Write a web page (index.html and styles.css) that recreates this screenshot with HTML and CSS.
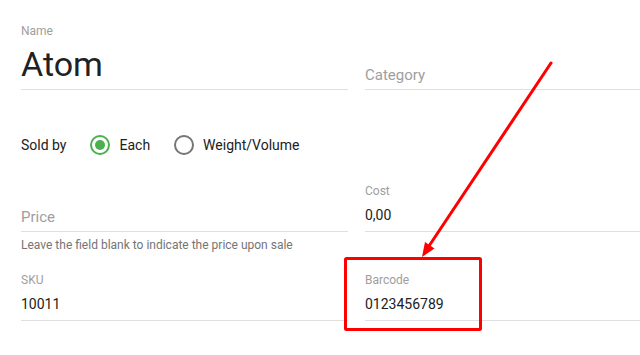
FILE: index.html
```html
<!DOCTYPE html>
<html lang="en">

<head>
    <meta charset="UTF-8">
    <meta name="viewport" content="width=device-width, initial-scale=1.0">
    <title>Item</title>
    <link rel="stylesheet" href="styles.css">
</head>

<body>
    <div class="form">
        <div class="row">
            <div class="field">
                <div class="label">Name</div>
                <div class="value big">Atom</div>
            </div>
            <div class="field">
                <div class="label hidden">Category</div>
                <div class="value placeholder">Category</div>
            </div>
        </div>

        <div class="sold-by">
            <span class="sold-label">Sold by</span>
            <label class="radio"><span class="dot checked"></span>Each</label>
            <label class="radio"><span class="dot"></span>Weight/Volume</label>
        </div>

        <div class="row price-row">
            <div class="field">
                <div class="label hidden">Price</div>
                <div class="value placeholder price">Price</div>
            </div>
            <div class="field">
                <div class="label">Cost</div>
                <div class="value">0,00</div>
            </div>
        </div>
        <p class="hint">Leave the field blank to indicate the price upon sale</p>

        <div class="row sku-row">
            <div class="field">
                <div class="label">SKU</div>
                <div class="value">10011</div>
            </div>
            <div class="field">
                <div class="label">Barcode</div>
                <div class="value">0123456789</div>
            </div>
        </div>
    </div>

    <!-- annotation drawn over the form -->
    <svg class="markup" width="640" height="355" viewBox="0 0 640 355">
        <rect x="345.5" y="258.5" width="135" height="71" rx="1" fill="none" stroke="#f00" stroke-width="3"/>
        <line x1="551" y1="63" x2="429" y2="246" stroke="#f00" stroke-width="3" stroke-linecap="round"/>
        <polygon points="422,257 434.5,248.5 425,242" fill="#f00"/>
    </svg>
</body>

</html>
```

FILE: styles.css
```css
body {
    font-family: Roboto, "Liberation Sans", sans-serif;
    background-color: #fff;
    margin: 0;
    padding: 0;
    overflow: hidden;
}

.form {
    padding: 23px 0 0 21px;
}

.row {
    display: grid;
    grid-template-columns: 327px 1fr;
    column-gap: 17px;
    align-items: end;
}

.field {
    border-bottom: 1px solid #e0e0e0;
    padding-bottom: 4px;
}

.label {
    font-size: 12px;
    line-height: 16px;
    color: #9e9e9e;
    margin-bottom: 4px;
}

.hidden {
    visibility: hidden;
}

.value {
    font-size: 14px;
    line-height: 24px;
    color: #212121;
}

.big {
    font-size: 34px;
    line-height: 42px;
}

.placeholder {
    font-size: 15px;
    color: #9e9e9e;
    position: relative;
    top: 2px;
}

.sold-by {
    display: flex;
    align-items: center;
    margin-top: 43px;
    height: 24px;
    font-size: 14px;
    color: #212121;
}

.sold-label {
    margin-right: 24px;
}

.radio {
    display: flex;
    align-items: center;
    margin-right: 24px;
}

.dot {
    box-sizing: border-box;
    width: 20px;
    height: 20px;
    border: 2px solid #757575;
    border-radius: 50%;
    margin-right: 9px;
    display: flex;
    align-items: center;
    justify-content: center;
}

.dot.checked {
    border-color: #4caf50;
}

.dot.checked::after {
    content: "";
    width: 10px;
    height: 10px;
    border-radius: 50%;
    background-color: #4caf50;
}

.price-row {
    margin-top: 26px;
}

.hint {
    margin: 5px 0 0;
    font-size: 12px;
    line-height: 16px;
    color: #757575;
}

.sku-row {
    margin-top: 19px;
}

.markup {
    position: absolute;
    left: 0;
    top: 0;
    pointer-events: none;
}
```
